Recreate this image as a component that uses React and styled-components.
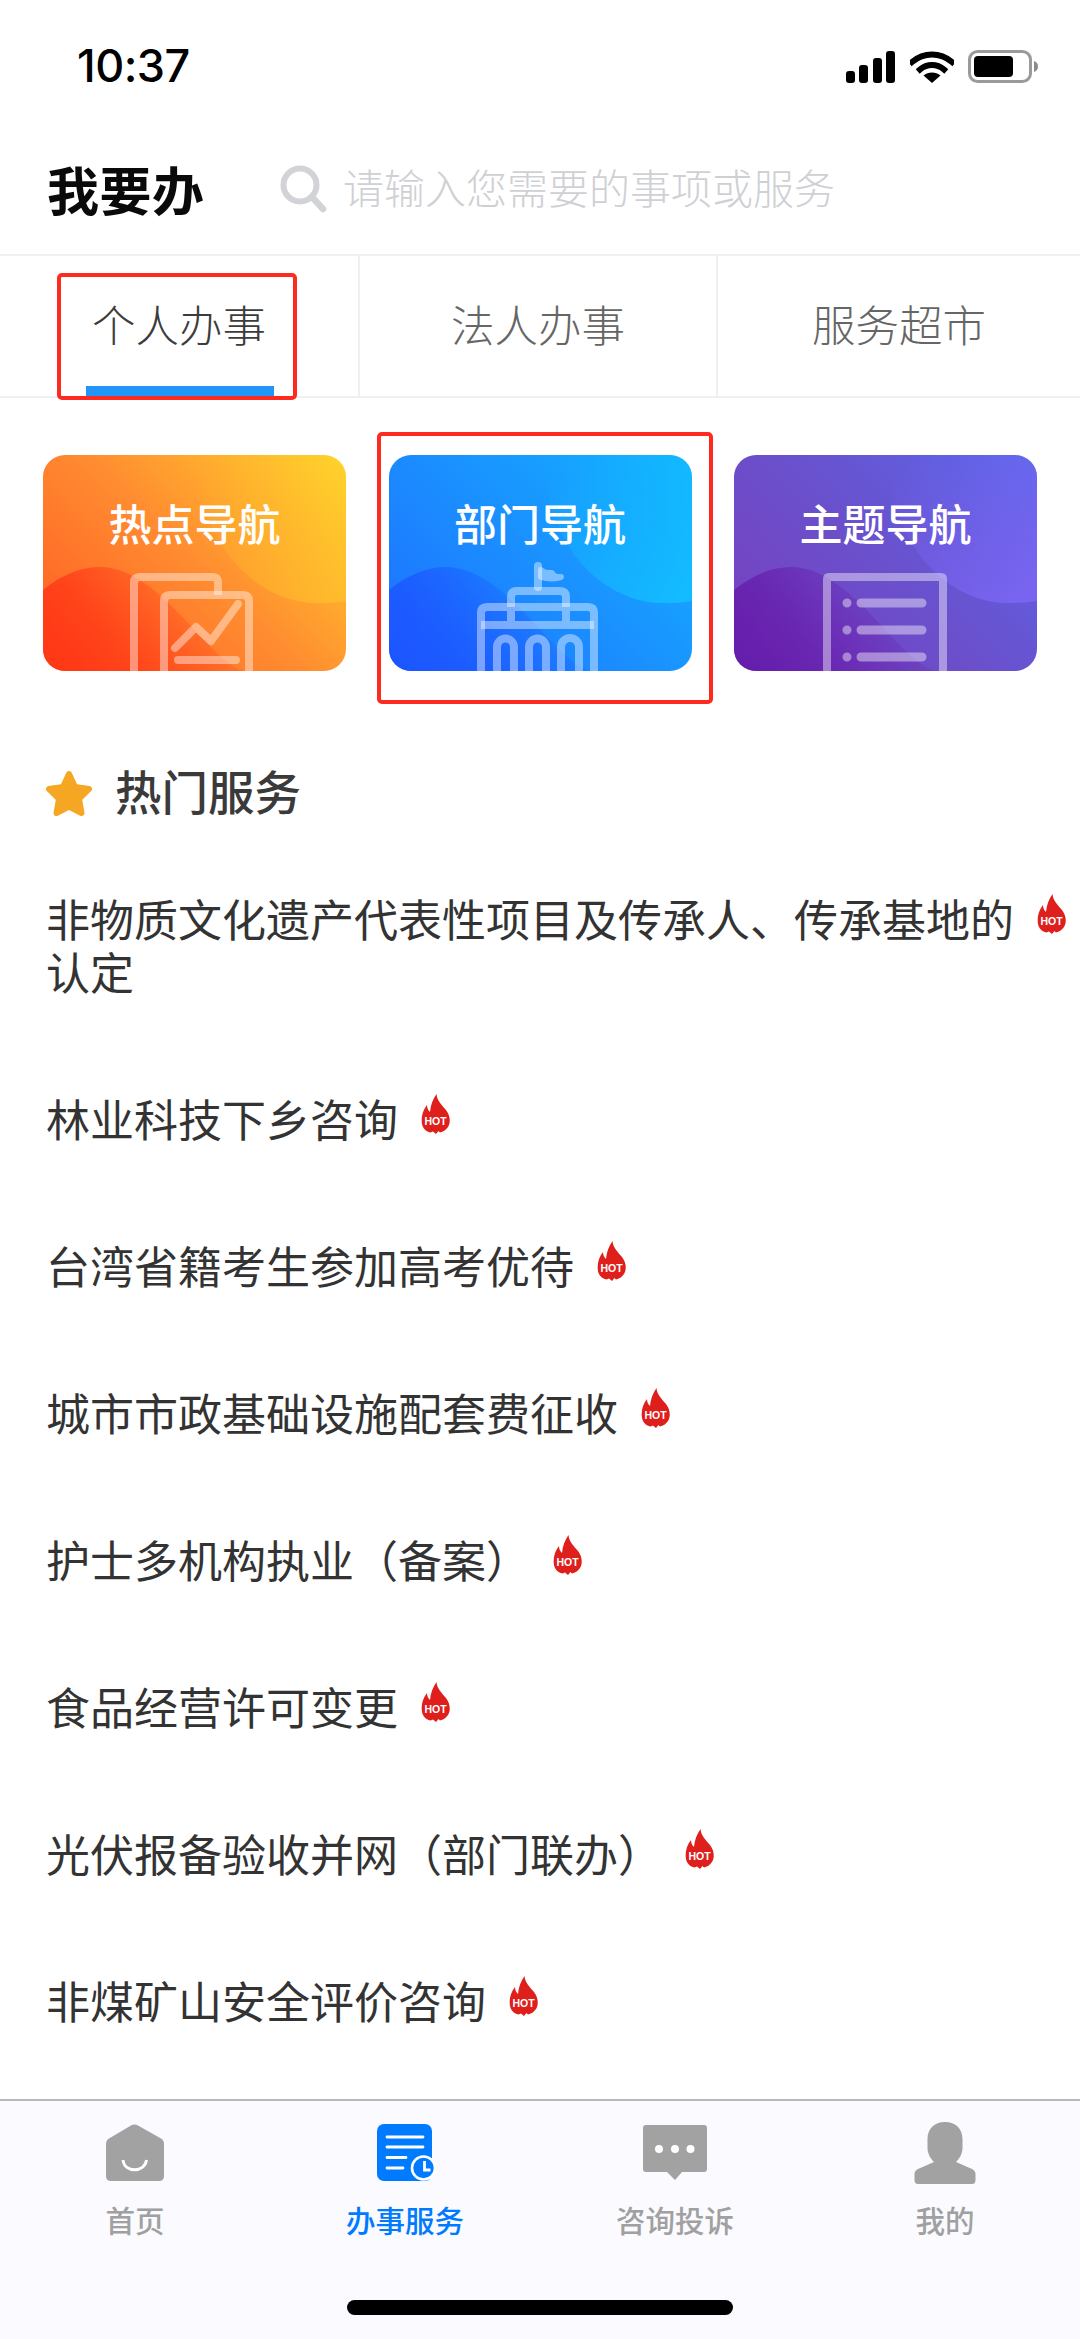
import React from 'react';
import styled, { createGlobalStyle } from 'styled-components';

const CJK = '"Noto Sans CJK SC", "Noto Sans", sans-serif';

const Global = createGlobalStyle`
  html, body { margin: 0; padding: 0; background: #fff; }
  * { box-sizing: border-box; }
  body { font-family: ${CJK}; }
`;

const Page = styled.div`
  width: 1080px; height: 2339px; background: #fff; display: flex; flex-direction: column; overflow: hidden;
`;

const StatusBar = styled.div`
  height: 110px; flex: none; display: flex; align-items: flex-start; justify-content: space-between;
  padding: 50px 41px 0 77px;
`;
const Clock = styled.div`
  font-family: Inter, "Liberation Sans", sans-serif; font-size: 45px; font-weight: 500; line-height: 32px;
  letter-spacing: -0.5px; color: #000;
`;
const StatusIcons = styled.div` display: flex; align-items: center; gap: 14px; `;

const Header = styled.div`
  height: 146px; flex: none; display: flex; align-items: center; padding: 14px 0 0 47px;
  border-bottom: 2px solid #f0f0f0;
`;
const PageTitle = styled.h1`
  margin: 0; width: 233px; flex: none; font-size: 52px; font-weight: 700; line-height: 60px; color: #0a0a0a; letter-spacing: 0.5px;
`;
const SearchBox = styled.div` display: flex; align-items: center; gap: 16px; `;
const Placeholder = styled.span`
  margin-top: -6px; font-size: 41px; line-height: 60px; color: #cfd0d4; font-weight: 300; white-space: nowrap;
`;

const Tabs = styled.div`
  height: 142px; flex: none; display: grid; grid-template-columns: 360px 358px 362px;
  border-bottom: 2px solid #f0f0f0;
`;
const Tab = styled.div`
  position: relative; display: flex; align-items: center; justify-content: center; padding-bottom: 6px;
  font-size: 43.5px; font-weight: 300; color: ${p => (p.$active ? '#3c3c3c' : '#666')};
  border-right: ${p => (p.$last ? 'none' : '2px solid #f0f0f0')};
`;
const TabUnderline = styled.div`
  position: absolute; left: 86px; bottom: -1px; width: 188px; height: 11px; background: #2196f8;
`;
const Annotation = styled.div`
  position: absolute; border: 4px solid #fe2a20; border-radius: 5px; pointer-events: none;
  left: ${p => p.$l}px; top: ${p => p.$t}px; width: ${p => p.$w}px; height: ${p => p.$h}px;
`;

const Cards = styled.div`
  display: grid; grid-template-columns: repeat(3, 303px); column-gap: 42.5px; padding: 57px 0 0 43px; flex: none;
`;
const CardWrap = styled.div` position: relative; `;
const Card = styled.div`
  position: relative; height: 216px; border-radius: 22px; overflow: hidden; background: ${p => p.$bg};
  display: flex; justify-content: center;
`;
const CardArt = styled.svg` position: absolute; left: 0; top: 0; `;
const CardTitle = styled.div`
  position: relative; margin-top: 37px; font-size: 43px; line-height: 60px; font-weight: 500; color: #fff; height: 60px;
`;

const SectionHead = styled.div`
  display: flex; align-items: center; gap: 22px; margin: 92px 0 0 45px; height: 60px; flex: none;
`;
const SectionTitle = styled.h2` margin: -7px 0 0; font-size: 46.5px; line-height: 60px; font-weight: 500; color: #3a3a3a; `;

const List = styled.div` display: flex; flex-direction: column; gap: 94px; padding: 69px 0 0 46px; `;
const Row = styled.div` display: flex; align-items: flex-start; gap: 23px; `;
const RowText = styled.div`
  font-size: 44px; line-height: 53px; color: #333; font-weight: 400; max-width: 968px;
`;

const TabBar = styled.div`
  margin-top: auto; height: 240px; flex: none; background: #fafaff; border-top: 2px solid #b8b8bc;
  display: flex; flex-direction: column; align-items: center;
`;
const TabItems = styled.div` width: 100%; display: grid; grid-template-columns: repeat(4, 270px); padding-top: 23px; `;
const TabItem = styled.div` display: flex; flex-direction: column; align-items: center; `;
const TabIconBox = styled.div` height: 62px; display: flex; align-items: flex-start; justify-content: center; `;
const TabLabel = styled.div`
  margin-top: 13px; font-size: 29.5px; line-height: 40px; font-weight: 500;
  color: ${p => (p.$active ? '#007aff' : '#a0a0a0')};
`;
const HomeBar = styled.div` width: 386px; height: 15px; border-radius: 8px; background: #000; margin-top: 61px; `;

const Signal = () => (
  <svg width="50" height="32" viewBox="0 0 50 32">
    <rect x="0" y="20" width="9" height="12" rx="3" fill="#000" />
    <rect x="13" y="14" width="9" height="18" rx="3" fill="#000" />
    <rect x="27" y="7" width="9" height="25" rx="3" fill="#000" />
    <rect x="40" y="0" width="9" height="32" rx="3" fill="#000" />
  </svg>
);
const Wifi = () => (
  <svg width="44" height="32" viewBox="0 0 44 32">
    <path d="M2 11 C14 1 30 1 42 11" fill="none" stroke="#000" strokeWidth="6" strokeLinecap="square" />
    <path d="M10 18.5 C17 12.5 27 12.5 34 18.5" fill="none" stroke="#000" strokeWidth="6" strokeLinecap="square" />
    <path d="M22 32 L13.5 24.5 C18 20.5 26 20.5 30.5 24.5 Z" fill="#000" />
  </svg>
);
const Battery = () => (
  <svg width="71" height="33" viewBox="0 0 71 33">
    <rect x="1.5" y="1.5" width="61" height="30" rx="8" fill="none" stroke="#9a9a9a" strokeWidth="3" />
    <rect x="6" y="6" width="39" height="21" rx="4" fill="#000" />
    <path d="M66 11 C69 12 70 14 70 16.5 C70 19 69 21 66 22 Z" fill="#8a8a8a" />
  </svg>
);
const SearchIcon = () => (
  <svg width="47" height="48" viewBox="0 0 47 48">
    <circle cx="20" cy="20" r="16.5" fill="none" stroke="#d2d3d6" strokeWidth="6" />
    <path d="M32 32 L43 44" stroke="#d2d3d6" strokeWidth="6.5" strokeLinecap="round" />
  </svg>
);

const Decor = ({ id, wave, blob, blobAlpha, children }) => (
  <CardArt width="303" height="216" viewBox="0 0 303 216">
    <defs>
      <linearGradient id={`${id}w`} x1="0" y1="0.9" x2="1" y2="0.5">
        <stop offset="0" stopColor={wave} />
        <stop offset="0.35" stopColor={wave} stopOpacity="0.75" />
        <stop offset="0.95" stopColor={wave} stopOpacity="0" />
      </linearGradient>
      <linearGradient id={`${id}b`} x1="0" y1="0" x2="0.85" y2="1">
        <stop offset="0.1" stopColor={blob} stopOpacity="0" />
        <stop offset="1" stopColor={blob} stopOpacity={blobAlpha} />
      </linearGradient>
    </defs>
    <path d="M158 0 C150 80 210 150 277 148 Q292 148 303 146 V0 Z" fill={`url(#${id}b)`} />
    <path d="M0 135 C18 120 38 112 57 112 C120 112 170 216 205 216 H0 Z" fill={`url(#${id}w)`} />
    <g fill="none" stroke="#fff" strokeOpacity="0.42" strokeWidth="8" strokeLinecap="round" strokeLinejoin="round">
      {children}
    </g>
  </CardArt>
);

const ReportArt = () => (
  <>
    <path d="M91 220 V128 Q91 122 97 122 H170 Q175 122 175 128 V140" strokeLinecap="butt" />
    <path d="M121 220 V146 Q121 140 127 140 H200 Q206 140 206 146 V220" strokeLinecap="butt" />
    <path d="M132 193 L153 172 L168 186 L195 149" />
    <path d="M135 205 H193" />
  </>
);
const BankArt = () => (
  <>
    <path d="M92 220 V158 Q92 152 98 152 H199 Q205 152 205 158 V220" strokeLinecap="butt" />
    <path d="M92 170 H205" strokeLinecap="butt" />
    <path d="M122 152 V142 Q122 136 128 136 H171 Q177 136 177 142 V152 M122 156 V166 M177 156 V166" strokeLinecap="butt" />
    <path d="M149 132 V111" />
    <path d="M152 115 C156 119 160 118 163 118 C165 122 168 122 172 122 C165 124 158 124 152 122 Z" strokeWidth="6" />
    <path d="M108 220 V192 A8.5 8.5 0 0 1 125 192 V220 M140 220 V192 A8.5 8.5 0 0 1 157 192 V220 M172 220 V192 A9 9 0 0 1 190 192 V220" strokeLinecap="butt" />
  </>
);
const ListArt = () => (
  <>
    <path d="M93 220 V124 Q93 122 95 122 H207 Q209 122 209 124 V220" strokeLinecap="butt" />
    <path d="M127 148 H188 M127 175 H188 M127 202 H188" strokeWidth="9" />
    <path d="M113 148 h.01 M113 175 h.01 M113 202 h.01" strokeWidth="9" />
  </>
);

const Star = () => (
  <svg width="48" height="47" viewBox="0 0 48 47">
    <path d="M24 4 L30 17 L44 19 L34 29 L36.5 43 L24 36.5 L11.5 43 L14 29 L4 19 L18 17 Z" fill="#f5a623" stroke="#f5a623" strokeWidth="6" strokeLinejoin="round" />
  </svg>
);

const Hot = () => (
  <svg width="30" height="42" viewBox="0 0 30 42" style={{ flex: 'none', marginTop: 2 }}>
    <path d="M15.5 0 C16 7 21 11 25 16 C29 21 30 28 27 33 C25 36 22 38 19 38.5 L17.5 37 L15 40 L12 37.5 L9.5 38.5 C6 38 3 35.5 1.5 32 C-0.5 26 1 17 6 11 C6 14 7 16 9 18 C9.5 11 12 5 15.5 0 Z" fill="#de1f1b" />
    <text x="14.5" y="31" textAnchor="middle" fontFamily='"Liberation Sans", sans-serif' fontWeight="700" fontSize="10.5" fill="#fff">HOT</text>
  </svg>
);

const HomeIcon = () => (
  <svg width="58" height="58" viewBox="0 0 58 58">
    <path d="M25 1.5 Q28.5 -0.5 32 1.5 L55 14.5 Q58 16.5 58 20 V52 Q58 57 53 57 H5 Q0 57 0 52 V20 Q0 16.5 3 14.5 Z" fill="#a2a2a2" />
    <path d="M17 36 C18 49 39 49 40.5 36" fill="none" stroke="#fff" strokeWidth="2.8" />
  </svg>
);
const DocIcon = () => (
  <svg width="60" height="58" viewBox="0 0 60 58" style={{ marginLeft: 3 }}>
    <rect x="0" y="0" width="55" height="57" rx="7" fill="#007aff" />
    <path d="M10 13 H46 M10 23 H46 M10 33.5 H29 M10 44 H26" stroke="#fff" strokeWidth="2.8" strokeLinecap="round" />
    <circle cx="46.5" cy="44" r="11.5" fill="#007aff" stroke="#fff" strokeWidth="2.6" />
    <path d="M47.5 37 V46 H53.5" fill="none" stroke="#fff" strokeWidth="2.8" />
  </svg>
);
const ChatIcon = () => (
  <svg width="64" height="56" viewBox="0 0 64 56" style={{ marginTop: 1 }}>
    <path d="M3 0 H61 Q64 0 64 3 V44 Q64 47 61 47 H39 L32 55 L24 47 H3 Q0 47 0 44 V3 Q0 0 3 0 Z" fill="#a2a2a2" />
    <circle cx="16" cy="24" r="4" fill="#fff" /><circle cx="32" cy="24" r="4" fill="#fff" /><circle cx="47.5" cy="24" r="4" fill="#fff" />
  </svg>
);
const PersonIcon = () => (
  <svg width="62" height="62" viewBox="0 0 62 62" style={{ marginTop: -2 }}>
    <path d="M31 0 C42 0 48.5 7 48.5 17 V26 C48.5 31 46 36 42 40 L58 47 Q61.5 49 61.5 52 V58 Q61.5 62 58 62 H4 Q0.5 62 0.5 58 V52 Q0.5 49 4 47 L20 40 C16 36 13.5 31 13.5 26 V17 C13.5 7 20 0 31 0 Z" fill="#a2a2a2" />
  </svg>
);

const rows = [
  '非物质文化遗产代表性项目及传承人、传承基地的认定',
  '林业科技下乡咨询',
  '台湾省籍考生参加高考优待',
  '城市市政基础设施配套费征收',
  '护士多机构执业（备案）',
  '食品经营许可变更',
  '光伏报备验收并网（部门联办）',
  '非煤矿山安全评价咨询',
];
const bar = [
  { label: '首页', Icon: HomeIcon },
  { label: '办事服务', Icon: DocIcon, active: true },
  { label: '咨询投诉', Icon: ChatIcon },
  { label: '我的', Icon: PersonIcon },
];

export default function App() {
  return (
    <Page>
      <Global />
      <StatusBar>
        <Clock>10:37</Clock>
        <StatusIcons>
          <Signal /><Wifi /><Battery />
        </StatusIcons>
      </StatusBar>
      <Header>
        <PageTitle>我要办</PageTitle>
        <SearchBox>
          <SearchIcon />
          <Placeholder>请输入您需要的事项或服务</Placeholder>
        </SearchBox>
      </Header>
      <Tabs>
        <Tab $active>
          个人办事
          <TabUnderline />
          <Annotation $l={57} $t={17} $w={240} $h={127} />
        </Tab>
        <Tab>法人办事</Tab>
        <Tab $last>服务超市</Tab>
      </Tabs>
      <Cards>
        <CardWrap>
          <Card $bg="linear-gradient(45deg, #ff5a24 0%, #ff8c30 50%, #ffd42b 100%)">
            <Decor id="a" wave="#ff3715" blob="#ffd42a" blobAlpha="0.4"><ReportArt /></Decor>
            <CardTitle>热点导航</CardTitle>
          </Card>
        </CardWrap>
        <CardWrap>
          <Card $bg="linear-gradient(45deg, #1f6eff 0%, #1a90ff 50%, #12b4ff 100%)">
            <Decor id="b" wave="#1c55ff" blob="#12c4ff" blobAlpha="0.75"><BankArt /></Decor>
            <CardTitle>部门导航</CardTitle>
          </Card>
          <Annotation $l={-12} $t={-23} $w={336} $h={272} />
        </CardWrap>
        <CardWrap>
          <Card $bg="linear-gradient(45deg, #7a3fbe 0%, #6a50cc 50%, #5a68ec 100%)">
            <Decor id="c" wave="#651cab" blob="#7c66f4" blobAlpha="0.85"><ListArt /></Decor>
            <CardTitle>主题导航</CardTitle>
          </Card>
        </CardWrap>
      </Cards>
      <SectionHead>
        <Star />
        <SectionTitle>热门服务</SectionTitle>
      </SectionHead>
      <List>
        {rows.map(t => (
          <Row key={t}>
            <RowText>{t}</RowText>
            <Hot />
          </Row>
        ))}
      </List>
      <TabBar>
        <TabItems>
          {bar.map(({ label, Icon, active }) => (
            <TabItem key={label}>
              <TabIconBox><Icon /></TabIconBox>
              <TabLabel $active={active}>{label}</TabLabel>
            </TabItem>
          ))}
        </TabItems>
        <HomeBar />
      </TabBar>
    </Page>
  );
}
